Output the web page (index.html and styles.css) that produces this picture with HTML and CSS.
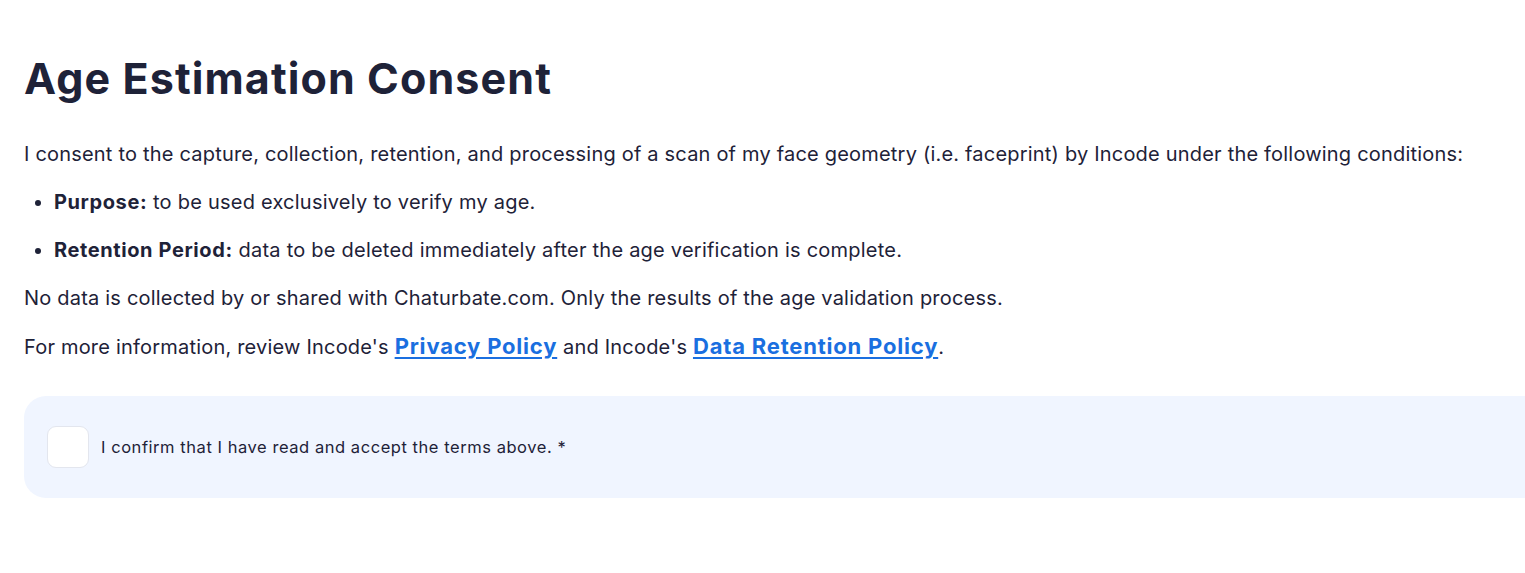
FILE: index.html
```html
<html>
<head>
    <title>Age Estimation Consent</title>
    <meta charset="UTF-8">
    <link rel="stylesheet" href="styles.css">
</head>
<body>
    <div id="consent_container">
        <h1 id="consent_title">Age Estimation Consent</h1>

        <p class="consent_text">I consent to the capture, collection, retention, and processing of a scan of my face geometry (i.e. faceprint) by Incode under the following conditions:</p>

        <ul id="consent_list">
            <li><b>Purpose:</b> to be used exclusively to verify my age.</li>
            <li><b>Retention Period:</b> data to be deleted immediately after the age verification is complete.</li>
        </ul>

        <p class="consent_text">No data is collected by or shared with Chaturbate.com. Only the results of the age validation process.</p>

        <p class="consent_text">For more information, review Incode's <a class="policy_link" href="#">Privacy Policy</a> and Incode's <a class="policy_link" href="#">Data Retention Policy</a>.</p>

        <div id="confirm_box">
            <label class="confirm_label">
                <span class="confirm_check"></span>
                I confirm that I have read and accept the terms above. *
            </label>
        </div>
    </div>
</body>
</html>
```

FILE: styles.css
```css
body{
    margin: 0px;
    font-family: Inter, "Noto Sans", sans-serif;
    background-color: white;
    color: #1e2238;
    overflow: hidden;
}

#consent_container{
    padding: 52px 0px 0px 24px;
    width: 1540px;
}

#consent_title{
    font-size: 43px;
    font-weight: 700;
    margin: 0px 0px 36px 0px;
    line-height: 52px;
    letter-spacing: 1.1px;
}

.consent_text{
    font-size: 20px;
    line-height: 28px;
    letter-spacing: 0.2px;
    margin: 0px 0px 20px 0px;
}

#consent_list{
    margin: 0px 0px 20px 0px;
    padding-left: 30px;
    font-size: 20px;
    line-height: 28px;
    letter-spacing: 0.23px;
}

#consent_list li{
    margin-bottom: 20px;
}

#consent_list li:last-child{
    margin-bottom: 0px;
}

#consent_list b{
    letter-spacing: 0.6px;
}

.policy_link{
    color: #1a6fe0;
    font-weight: 700;
    font-size: 22px;
    letter-spacing: 0.8px;
    text-decoration: underline;
    text-underline-offset: 3px;
}

#confirm_box{
    margin-top: 35px;
    background-color: #f0f5ff;
    border-radius: 22px;
    height: 102px;
    padding-left: 23px;
    display: flex;
    align-items: center;
}

.confirm_label{
    display: flex;
    align-items: center;
    font-size: 16.5px;
    letter-spacing: 0.55px;
    cursor: pointer;
}

.confirm_check{
    width: 40px;
    height: 40px;
    background: white;
    border: 1px solid #e3e6ee;
    border-radius: 9px;
    margin-right: 12px;
}
```
